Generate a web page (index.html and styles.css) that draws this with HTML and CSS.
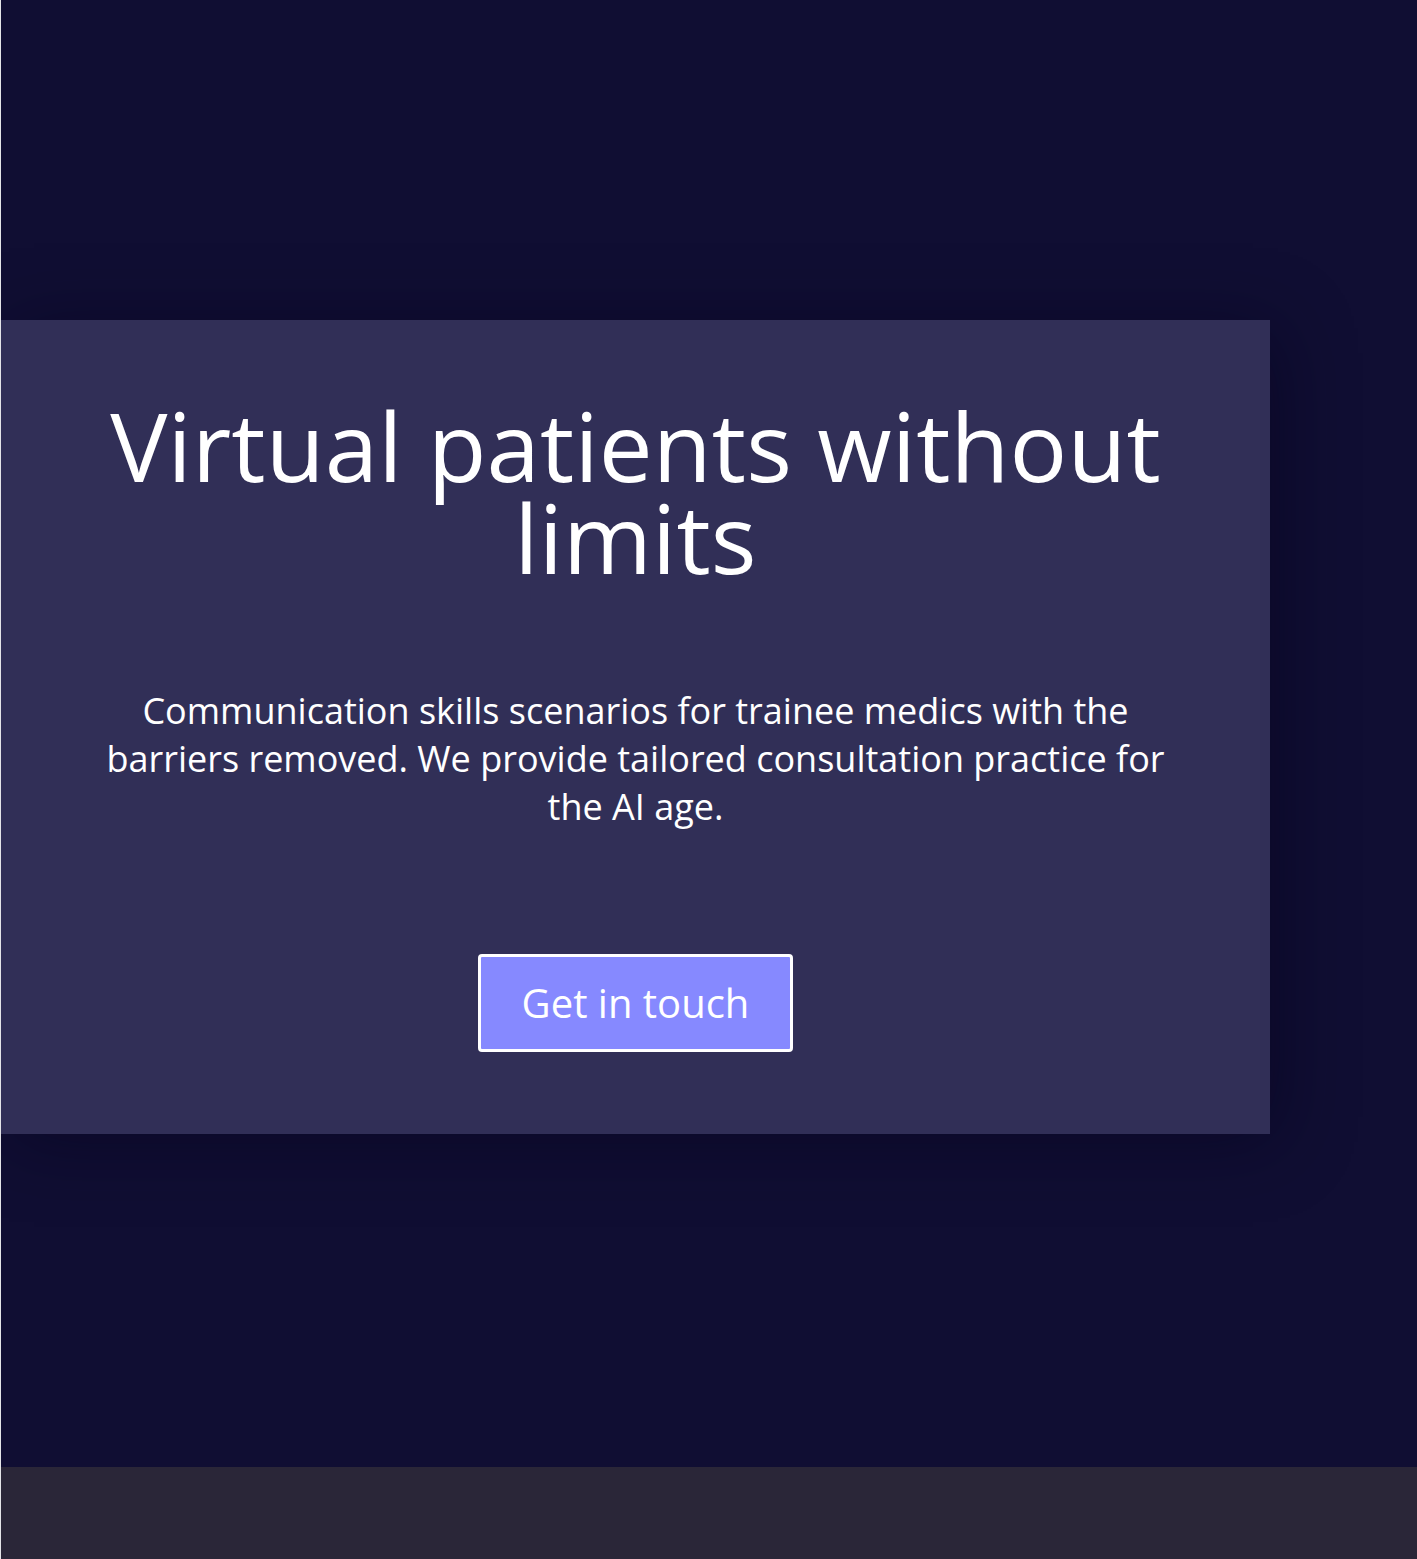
FILE: index.html
```html
<!DOCTYPE html>
<html lang="en">
<head>
<meta charset="utf-8">
<title>Virtual patients without limits</title>
<link rel="stylesheet" href="styles.css">
</head>
<body>
<main class="hero">
  <section class="card">
    <h1 class="title">Virtual patients without limits</h1>
    <p class="lead">Communication skills scenarios for trainee medics with the barriers removed. We provide tailored consultation practice for the AI age.</p>
    <a class="cta" href="#">Get in touch</a>
  </section>
</main>
<footer class="footer"></footer>
</body>
</html>
```

FILE: styles.css
```css
html, body {
  margin: 0;
  padding: 0;
}
body {
  background: #2a2638;
  border-left: 1px solid #e4e4e8;
  font-family: "Open Sans", "Noto Sans", sans-serif;
  color: #ffffff;
  min-height: 1559px;
  box-sizing: border-box;
}
.hero {
  background: #100e33;
  padding: 320px 0 333px;
}
.card {
  width: 1269px;
  box-sizing: border-box;
  background: #312f57;
  padding: 79px 100px 82px;
  display: flex;
  flex-direction: column;
  align-items: center;
  text-align: center;
  box-shadow: 8px 8px 70px rgba(5, 3, 25, 0.45);
}
.title {
  margin: 0;
  font-weight: 400;
  font-size: 96px;
  line-height: 92px;
  letter-spacing: 0.15px;
}
.lead {
  margin: 104px 0 0;
  font-size: 36px;
  line-height: 48px;
}
.cta {
  margin-top: 123px;
  display: inline-block;
  width: 315px;
  height: 98px;
  box-sizing: border-box;
  border: 3px solid #ffffff;
  border-radius: 4px;
  background: #8689ff;
  color: #ffffff;
  text-decoration: none;
  font-size: 40px;
  line-height: 92px;
}
.footer {
  background: #2a2638;
  height: 92px;
}
```
